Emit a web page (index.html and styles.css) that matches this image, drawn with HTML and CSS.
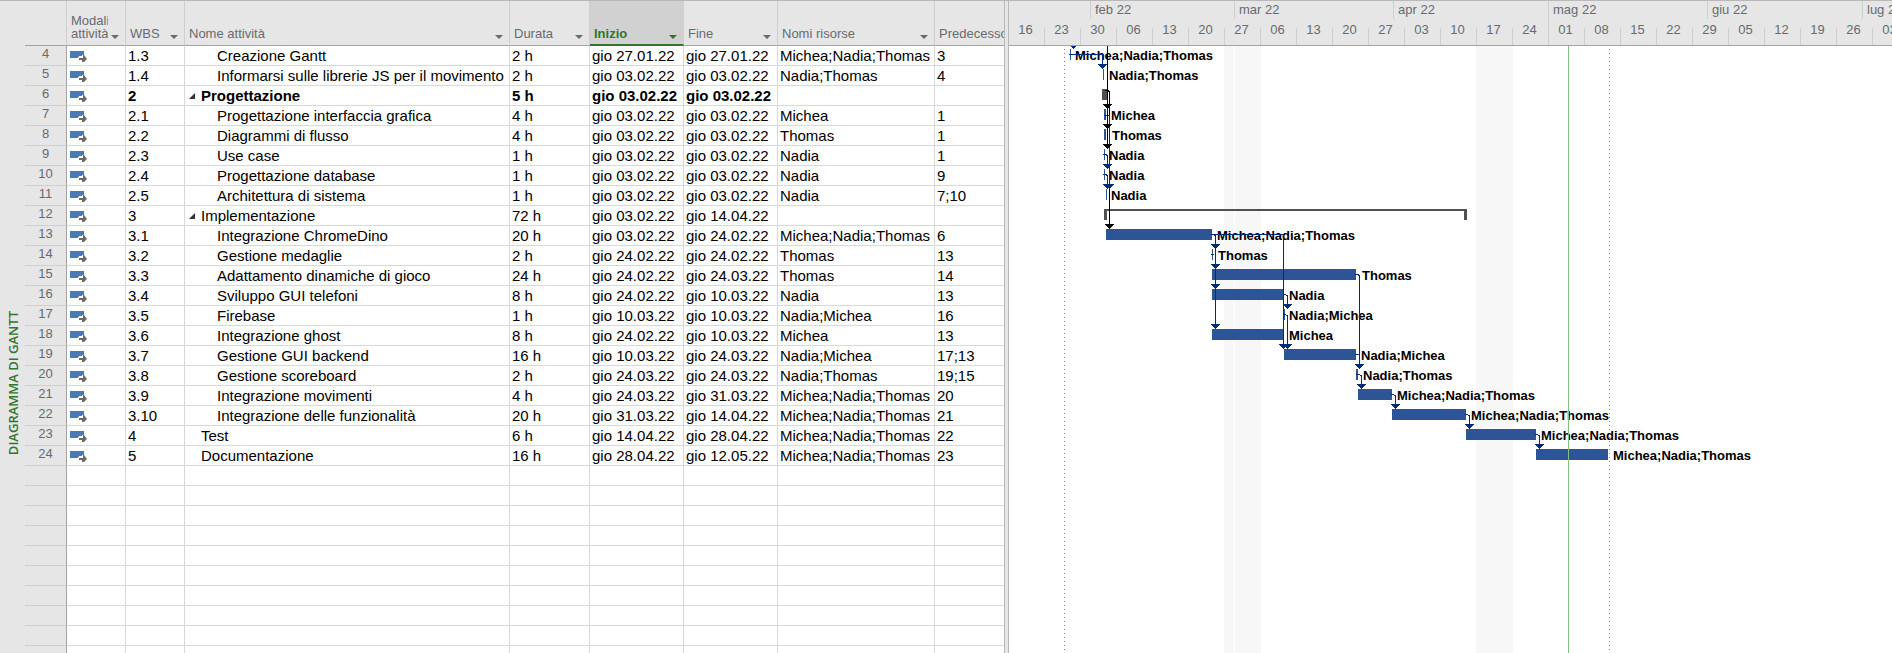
FILE: index.html
```html
<!DOCTYPE html>
<html lang="it">
<head>
<meta charset="utf-8">
<title>Diagramma di Gantt</title>
<link rel="stylesheet" href="styles.css">
</head>
<body>
<svg class="defs" aria-hidden="true">
  <symbol id="auto" viewBox="0 0 17 12">
    <path fill="#4a7ab5" d="M0 1h14v4h-2v1H9v2H0z"/>
    <path fill="#6b6b6b" d="M9 8h3V5h2l3 4-3 3h-2v-2H9z"/>
    <path fill="#fff" d="M8 7h4V5h1v3H9v4H8z"/>
  </symbol>
  <symbol id="filter" viewBox="0 0 8 4"><path fill="currentColor" d="M0 0h8L4 4z"/></symbol>
  <symbol id="open" viewBox="0 0 6 6"><path fill="#333" d="M6 0v6H0z"/></symbol>
</svg>
<main class="app">
  <aside class="view-name"><span>DIAGRAMMA DI GANTT</span></aside>
  <section class="sheet">
    <table>
      <colgroup><col class="c-num"><col class="c-mode"><col class="c-wbs"><col class="c-name"><col class="c-dur"><col class="c-date"><col class="c-date"><col class="c-res"><col class="c-pred"></colgroup>
      <thead>
        <tr>
          <th></th>
          <th><div class="head"><span>Modalità attività</span><button aria-label="Filtra modalità"><svg><use href="#filter"/></svg></button></div></th>
          <th><div class="head"><span>WBS</span><button aria-label="Filtra WBS"><svg><use href="#filter"/></svg></button></div></th>
          <th><div class="head"><span>Nome attività</span><button aria-label="Filtra nome"><svg><use href="#filter"/></svg></button></div></th>
          <th><div class="head"><span>Durata</span><button aria-label="Filtra durata"><svg><use href="#filter"/></svg></button></div></th>
          <th class="sorted"><div class="head"><span>Inizio</span><button aria-label="Filtra inizio"><svg><use href="#filter"/></svg></button></div></th>
          <th><div class="head"><span>Fine</span><button aria-label="Filtra fine"><svg><use href="#filter"/></svg></button></div></th>
          <th><div class="head"><span>Nomi risorse</span><button aria-label="Filtra risorse"><svg><use href="#filter"/></svg></button></div></th>
          <th><div class="head last"><span>Predecessori</span></div></th>
        </tr>
      </thead>
      <tbody>
        <tr><th>4</th><td><svg class="mode"><use href="#auto"/></svg></td><td>1.3</td><td class="l2">Creazione Gantt</td><td>2 h</td><td>gio 27.01.22</td><td>gio 27.01.22</td><td>Michea;Nadia;Thomas</td><td>3</td></tr>
        <tr><th>5</th><td><svg class="mode"><use href="#auto"/></svg></td><td>1.4</td><td class="l2">Informarsi sulle librerie JS per il movimento</td><td>2 h</td><td>gio 03.02.22</td><td>gio 03.02.22</td><td>Nadia;Thomas</td><td>4</td></tr>
        <tr class="strong"><th>6</th><td><svg class="mode"><use href="#auto"/></svg></td><td>2</td><td class="group"><button aria-label="Comprimi"><svg><use href="#open"/></svg></button>Progettazione</td><td>5 h</td><td>gio 03.02.22</td><td>gio 03.02.22</td><td></td><td></td></tr>
        <tr><th>7</th><td><svg class="mode"><use href="#auto"/></svg></td><td>2.1</td><td class="l2">Progettazione interfaccia grafica</td><td>4 h</td><td>gio 03.02.22</td><td>gio 03.02.22</td><td>Michea</td><td>1</td></tr>
        <tr><th>8</th><td><svg class="mode"><use href="#auto"/></svg></td><td>2.2</td><td class="l2">Diagrammi di flusso</td><td>4 h</td><td>gio 03.02.22</td><td>gio 03.02.22</td><td>Thomas</td><td>1</td></tr>
        <tr><th>9</th><td><svg class="mode"><use href="#auto"/></svg></td><td>2.3</td><td class="l2">Use case</td><td>1 h</td><td>gio 03.02.22</td><td>gio 03.02.22</td><td>Nadia</td><td>1</td></tr>
        <tr><th>10</th><td><svg class="mode"><use href="#auto"/></svg></td><td>2.4</td><td class="l2">Progettazione database</td><td>1 h</td><td>gio 03.02.22</td><td>gio 03.02.22</td><td>Nadia</td><td>9</td></tr>
        <tr><th>11</th><td><svg class="mode"><use href="#auto"/></svg></td><td>2.5</td><td class="l2">Architettura di sistema</td><td>1 h</td><td>gio 03.02.22</td><td>gio 03.02.22</td><td>Nadia</td><td>7;10</td></tr>
        <tr><th>12</th><td><svg class="mode"><use href="#auto"/></svg></td><td>3</td><td class="group"><button aria-label="Comprimi"><svg><use href="#open"/></svg></button>Implementazione</td><td>72 h</td><td>gio 03.02.22</td><td>gio 14.04.22</td><td></td><td></td></tr>
        <tr><th>13</th><td><svg class="mode"><use href="#auto"/></svg></td><td>3.1</td><td class="l2">Integrazione ChromeDino</td><td>20 h</td><td>gio 03.02.22</td><td>gio 24.02.22</td><td>Michea;Nadia;Thomas</td><td>6</td></tr>
        <tr><th>14</th><td><svg class="mode"><use href="#auto"/></svg></td><td>3.2</td><td class="l2">Gestione medaglie</td><td>2 h</td><td>gio 24.02.22</td><td>gio 24.02.22</td><td>Thomas</td><td>13</td></tr>
        <tr><th>15</th><td><svg class="mode"><use href="#auto"/></svg></td><td>3.3</td><td class="l2">Adattamento dinamiche di gioco</td><td>24 h</td><td>gio 24.02.22</td><td>gio 24.03.22</td><td>Thomas</td><td>14</td></tr>
        <tr><th>16</th><td><svg class="mode"><use href="#auto"/></svg></td><td>3.4</td><td class="l2">Sviluppo GUI telefoni</td><td>8 h</td><td>gio 24.02.22</td><td>gio 10.03.22</td><td>Nadia</td><td>13</td></tr>
        <tr><th>17</th><td><svg class="mode"><use href="#auto"/></svg></td><td>3.5</td><td class="l2">Firebase</td><td>1 h</td><td>gio 10.03.22</td><td>gio 10.03.22</td><td>Nadia;Michea</td><td>16</td></tr>
        <tr><th>18</th><td><svg class="mode"><use href="#auto"/></svg></td><td>3.6</td><td class="l2">Integrazione ghost</td><td>8 h</td><td>gio 24.02.22</td><td>gio 10.03.22</td><td>Michea</td><td>13</td></tr>
        <tr><th>19</th><td><svg class="mode"><use href="#auto"/></svg></td><td>3.7</td><td class="l2">Gestione GUI backend</td><td>16 h</td><td>gio 10.03.22</td><td>gio 24.03.22</td><td>Nadia;Michea</td><td>17;13</td></tr>
        <tr><th>20</th><td><svg class="mode"><use href="#auto"/></svg></td><td>3.8</td><td class="l2">Gestione scoreboard</td><td>2 h</td><td>gio 24.03.22</td><td>gio 24.03.22</td><td>Nadia;Thomas</td><td>19;15</td></tr>
        <tr><th>21</th><td><svg class="mode"><use href="#auto"/></svg></td><td>3.9</td><td class="l2">Integrazione movimenti</td><td>4 h</td><td>gio 24.03.22</td><td>gio 31.03.22</td><td>Michea;Nadia;Thomas</td><td>20</td></tr>
        <tr><th>22</th><td><svg class="mode"><use href="#auto"/></svg></td><td>3.10</td><td class="l2">Integrazione delle funzionalità</td><td>20 h</td><td>gio 31.03.22</td><td>gio 14.04.22</td><td>Michea;Nadia;Thomas</td><td>21</td></tr>
        <tr><th>23</th><td><svg class="mode"><use href="#auto"/></svg></td><td>4</td><td class="l1">Test</td><td>6 h</td><td>gio 14.04.22</td><td>gio 28.04.22</td><td>Michea;Nadia;Thomas</td><td>22</td></tr>
        <tr><th>24</th><td><svg class="mode"><use href="#auto"/></svg></td><td>5</td><td class="l1">Documentazione</td><td>16 h</td><td>gio 28.04.22</td><td>gio 12.05.22</td><td>Michea;Nadia;Thomas</td><td>23</td></tr>
        <tr><th></th><td></td><td></td><td></td><td></td><td></td><td></td><td></td><td></td></tr>
        <tr><th></th><td></td><td></td><td></td><td></td><td></td><td></td><td></td><td></td></tr>
        <tr><th></th><td></td><td></td><td></td><td></td><td></td><td></td><td></td><td></td></tr>
        <tr><th></th><td></td><td></td><td></td><td></td><td></td><td></td><td></td><td></td></tr>
        <tr><th></th><td></td><td></td><td></td><td></td><td></td><td></td><td></td><td></td></tr>
        <tr><th></th><td></td><td></td><td></td><td></td><td></td><td></td><td></td><td></td></tr>
        <tr><th></th><td></td><td></td><td></td><td></td><td></td><td></td><td></td><td></td></tr>
        <tr><th></th><td></td><td></td><td></td><td></td><td></td><td></td><td></td><td></td></tr>
        <tr><th></th><td></td><td></td><td></td><td></td><td></td><td></td><td></td><td></td></tr>
        <tr><th></th><td></td><td></td><td></td><td></td><td></td><td></td><td></td><td></td></tr>
      </tbody>
    </table>
  </section>
  <div class="splitter"></div>
  <section class="chart">
    <div class="scale">
      <div class="months"><span class="m-jan"></span><span class="m28">feb 22</span><span class="m31">mar 22</span><span class="m30">apr 22</span><span class="m31">mag 22</span><span class="m30">giu 22</span><span class="m31">lug 22</span></div>
      <div class="weeks"><span>16</span><span>23</span><span>30</span><span>06</span><span>13</span><span>20</span><span>27</span><span>06</span><span>13</span><span>20</span><span>27</span><span>03</span><span>10</span><span>17</span><span class="tall">24</span><span>01</span><span>08</span><span>15</span><span>22</span><span>29</span><span>05</span><span>12</span><span>19</span><span>26</span><span>03</span></div>
    </div>
    <svg class="plot" role="img" aria-label="Barre delle attività">
      <defs><path id="a" d="M-4 -5h9v1h-1v1h-1v1h-1v1h-1v1h-1v-1h-1v-1h-1v-1h-1v-1h-1z"/></defs>
      <g class="off">
        <rect x="215" width="10" height="100%"/><rect x="226" width="26" height="100%"/><rect x="467" width="37" height="100%"/>
      </g>
      <g class="limit"><path d="M55.5 3V2000M600.5 3V2000"/></g>
      <g class="bar">
        <rect x="61" y="3" width="1" height="11"/><rect x="94" y="23" width="1" height="11"/>
        <rect x="95" y="63" width="2" height="11"/><rect x="95" y="83" width="2" height="11"/>
        <rect x="95" y="103" width="1" height="11"/><rect x="95" y="123" width="1" height="11"/><rect x="97" y="143" width="1" height="11"/>
        <rect x="97" y="183" width="106" height="11"/><rect x="203" y="203" width="1" height="11"/>
        <rect x="203" y="223" width="144" height="11"/><rect x="203" y="243" width="72" height="11"/>
        <rect x="275" y="263" width="1" height="11"/><rect x="203" y="283" width="72" height="11"/>
        <rect x="275" y="303" width="72" height="11"/><rect x="347" y="323" width="2" height="11"/>
        <rect x="349" y="343" width="34" height="11"/><rect x="383" y="363" width="74" height="11"/>
        <rect x="457" y="383" width="70" height="11"/><rect x="527" y="403" width="72" height="11"/>
      </g>
      <g class="summary"><path d="M93 43h5v11h-5zM95 163h363v11h-3v-9H98v9h-3z"/></g>
      <g class="label">
        <text x="66" y="14">Michea;Nadia;Thomas</text><text x="100" y="34">Nadia;Thomas</text>
        <text x="102" y="74">Michea</text><text x="103" y="94">Thomas</text><text x="100" y="114">Nadia</text><text x="100" y="134">Nadia</text><text x="102" y="154">Nadia</text>
        <text x="208" y="194">Michea;Nadia;Thomas</text><text x="209" y="214">Thomas</text><text x="353" y="234">Thomas</text>
        <text x="280" y="254">Nadia</text><text x="280" y="274">Nadia;Michea</text><text x="280" y="294">Michea</text>
        <text x="352" y="314">Nadia;Michea</text><text x="354" y="334">Nadia;Thomas</text><text x="388" y="354">Michea;Nadia;Thomas</text>
        <text x="462" y="374">Michea;Nadia;Thomas</text><text x="532" y="394">Michea;Nadia;Thomas</text><text x="604" y="414">Michea;Nadia;Thomas</text>
      </g>
      <g class="link">
        <path d="M60 8.5H93.5V20M95 69.5H100.5V140M94 108.5H97L98.5 110V120M94 128.5H97L98.5 130V140"/>
        <path d="M202 188.5H274.5V300M203 188.5H205L206.5 190V280M202 208.5H205M346 228.5H349L350.5 230V320"/>
        <path d="M275 248.5H276L278.5 250V260M275 268.5H276L278.5 270V300M346 308.5H350M347 328.5H350L352.5 330V340"/>
        <path d="M382 348.5H384L386.5 350V360M456 368.5H458L460.5 370V380M526 388.5H528L530.5 390V400"/>
      </g>
      <g class="link dark"><path d="M98.5 0V100M96 44.5H99L100.5 46V69M100.5 143V180"/></g>
      <g class="tip dark"><use href="#a" x="98" y="63"/><use href="#a" x="98" y="83"/><use href="#a" x="98" y="103"/><use href="#a" x="100" y="183"/></g>
      <g class="tip">
        <use href="#a" x="64" y="3"/><use href="#a" x="93" y="23"/><use href="#a" x="98" y="123"/><use href="#a" x="98" y="143"/><use href="#a" x="100" y="143"/>
        <use href="#a" x="206" y="203"/><use href="#a" x="206" y="223"/><use href="#a" x="206" y="243"/><use href="#a" x="206" y="283"/>
        <use href="#a" x="278" y="263"/><use href="#a" x="274" y="303"/><use href="#a" x="278" y="303"/><use href="#a" x="350" y="323"/>
        <use href="#a" x="352" y="343"/><use href="#a" x="386" y="363"/><use href="#a" x="460" y="383"/><use href="#a" x="530" y="403"/>
      </g>
      <rect class="today" x="559" width="1" height="100%"/>
    </svg>
  </section>
</main>
</body>
</html>
```
FILE: styles.css
```css
* { box-sizing: border-box; }
body { margin: 0; background: #fff; color: #000; font: 15px/19px "Liberation Sans", Arial, sans-serif; }
button { border: 0; padding: 0; margin: 0; background: none; color: inherit; display: block; }
.defs { position: absolute; width: 0; height: 0; }
.app { display: flex; height: 100vh; overflow: hidden; border-top: 1px solid #b8b8b8; }

.view-name { flex: none; width: 25px; padding-top: 112px; background: #e6e6e6; display: flex; align-items: center; justify-content: center; }
.view-name span { writing-mode: vertical-rl; transform: rotate(180deg); color: #31752f; font: 600 13px/16px "Open Sans", sans-serif; white-space: nowrap; }

.sheet { flex: none; width: 979px; overflow: hidden; }
table { width: 100%; table-layout: fixed; border-collapse: separate; border-spacing: 0; }
.c-num { width: 42px; }
.c-mode, .c-wbs { width: 59px; }
.c-name { width: 325px; }
.c-dur { width: 80px; }
.c-date { width: 94px; }
.c-res { width: 157px; }
.c-pred { width: 69px; }
th { padding: 0; font-weight: normal; color: #676b70; background: #e6e6e6; }
thead th { height: 45px; border-right: 1px solid #cfcfcf; border-bottom: 1px solid #a3a3a3; vertical-align: bottom; text-align: left; font-size: 13px; line-height: 13px; }
thead th:last-child { border-right: 0; }
.head { display: flex; align-items: flex-end; justify-content: space-between; padding: 0 6px 5px 4px; }
.head span { flex: 1; min-width: 0; overflow: hidden; }
.head.last span { white-space: nowrap; }
.head.last { padding-right: 0; }
.head button { flex: none; padding: 0 0 1px 3px; }
.head svg { display: block; width: 8px; height: 4px; }
thead .sorted { background: #d1d1d1; color: #31752f; font-weight: bold; border-bottom: 2px solid #31752f; }
.sorted .head { padding-bottom: 4px; }
tbody th { height: 20px; border-right: 1px solid #a3a3a3; border-bottom: 1px solid #cfcfcf; font-size: 13px; line-height: 15px; vertical-align: top; }
td { height: 20px; padding: 0 0 0 2px; border-right: 1px solid #d9d9d9; border-bottom: 1px solid #d9d9d9; white-space: nowrap; overflow: hidden; }
td:last-child { border-right: 0; }
.mode { display: block; width: 17px; height: 12px; margin-left: 1px; }
.l1 { padding-left: 16px; }
.l2 { padding-left: 32px; }
.group { padding-left: 4px; }
.group button { display: inline-block; width: 12px; }
.group svg { display: block; width: 6px; height: 6px; margin-bottom: 2px; }
.strong td { font-weight: bold; }

.splitter { flex: none; width: 5px; background: #e6e6e6; border: 1px solid #b8b8b8; border-width: 0 1px; cursor: col-resize; }

.chart { flex: 1; min-width: 0; display: flex; flex-direction: column; overflow: hidden; }
.scale { flex: none; height: 45px; display: flex; flex-direction: column; justify-content: space-between; background: #e6e6e6; border-bottom: 1px solid #a3a3a3; color: #676b70; font-size: 13px; overflow: hidden; }
.months, .weeks { display: flex; height: 18px; }
.months span { flex: none; padding-left: 4px; border-left: 1px solid #cfcfcf; line-height: 18px; }
.months .m-jan { width: 81px; border: 0; }
.m28 { width: 144px; }
.m30 { width: 155px; }
.m31 { width: 159px; }
.weeks { height: 17px; align-items: flex-end; }
.weeks span { flex: none; width: 36px; height: 17px; padding-right: 2px; border-right: 1px solid #cfcfcf; text-align: center; line-height: 4px; }
.weeks .tall { height: 39px; padding-top: 22px; }
.plot { flex: 1; width: 100%; min-height: 0; display: block; shape-rendering: crispEdges; }
.off { fill: #f7f7f7; }
.limit { stroke: #808080; stroke-dasharray: 1 3; }
.bar { fill: #2d5595; }
.summary { fill: #505050; }
.label { font: bold 13px "Liberation Sans", Arial, sans-serif; }
.link { fill: none; stroke: #002b7f; }
.tip { fill: #002b7f; }
.link.dark { stroke: #000; }
.tip.dark { fill: #000; }
.today { fill: #80c080; }
```
